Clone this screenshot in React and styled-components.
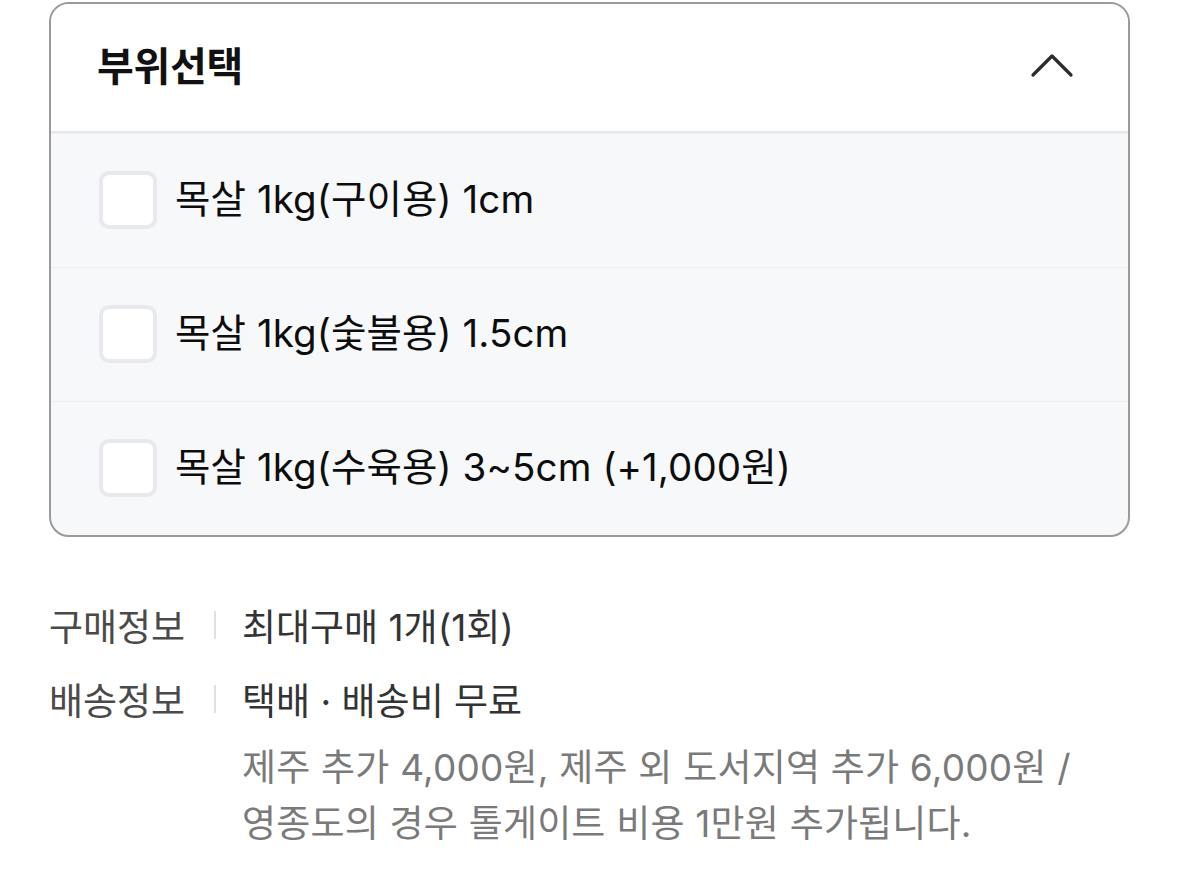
import { useState } from "react";
import styled, { createGlobalStyle } from "styled-components";

const GlobalStyle = createGlobalStyle`
  body {
    margin: 0;
    background: #fff;
    font-family: Inter, "Noto Sans CJK KR", sans-serif;
    color: #111;
  }
`;

const options = [
  { id: 1, label: "목살 1kg(구이용) 1cm" },
  { id: 2, label: "목살 1kg(숯불용) 1.5cm" },
  { id: 3, label: "목살 1kg(수육용) 3~5cm (+1,000원)" },
];

export default function App() {
  let [open, setOpen] = useState(true);
  let [checked, setChecked] = useState({});
  return (
    <Page>
      <GlobalStyle />
      <Card>
        <Header onClick={() => setOpen(!open)}>
          <Title>부위선택</Title>
          <svg width="44" height="28" viewBox="0 0 44 28">
            <path
              d="M3 25 L22 6 L41 25"
              fill="none"
              stroke="#2b2b2b"
              strokeWidth="3.2"
              strokeLinecap="round"
              strokeLinejoin="round"
            />
          </svg>
        </Header>
        {open &&
          options.map((o) => (
            <Option
              key={o.id}
              onClick={() => setChecked({ ...checked, [o.id]: !checked[o.id] })}
            >
              <Box $on={checked[o.id]} />
              <OptionText>{o.label}</OptionText>
            </Option>
          ))}
      </Card>
      <Info>
        <InfoRow>
          <InfoLabel>구매정보</InfoLabel>
          <Bar />
          <InfoValue>최대구매 1개(1회)</InfoValue>
        </InfoRow>
        <InfoRow>
          <InfoLabel>배송정보</InfoLabel>
          <Bar />
          <InfoValue>택배 · 배송비 무료</InfoValue>
        </InfoRow>
        <Note>
          제주 추가 4,000원, 제주 외 도서지역 추가 6,000원 /
          <br />
          영종도의 경우 톨게이트 비용 1만원 추가됩니다.
        </Note>
      </Info>
    </Page>
  );
}

const Page = styled.div`
  padding: 2px 49px 0 49px;
  width: 1081px;
`;

const Card = styled.div`
  border: 2px solid #9a9a9a;
  border-radius: 20px;
  overflow: hidden;
  background: #f7f8fa;
`;

const Header = styled.div`
  height: 129px;
  box-sizing: border-box;
  display: flex;
  align-items: center;
  justify-content: space-between;
  padding: 0 54px 8px 46px;
  background: #fff;
  border-bottom: 2px solid #e6e7ea;
  cursor: pointer;
`;

const Title = styled.h2`
  margin: 0;
  font-size: 40px;
  font-weight: 700;
  letter-spacing: -0.3px;
  color: #111;
`;

const Option = styled.div`
  height: 134px;
  box-sizing: border-box;
  display: flex;
  align-items: center;
  gap: 18px;
  padding: 0 48px 2px;
  border-top: 1px solid #eceef1;
  &:first-of-type {
    height: 133px;
    border-top: none;
  }
  cursor: pointer;
`;

const Box = styled.div`
  width: 50px;
  height: 50px;
  border: 4px solid #e8e9ec;
  border-radius: 10px;
  background: ${(p) => (p.$on ? "#222" : "#fff")};
`;

const OptionText = styled.span`
  display: inline-block;
  padding-bottom: 8px;
  font-size: 38.5px;
  font-weight: 400;
  letter-spacing: 0.1px;
  color: #0d0d0d;
`;

const Info = styled.div`
  padding-top: 51px;
`;

const InfoRow = styled.div`
  display: flex;
  align-items: center;
  height: 74px;
`;

const InfoLabel = styled.span`
  width: 165px;
  font-size: 37px;
  color: #4a4a4a;
`;

const Bar = styled.span`
  width: 2px;
  height: 28px;
  background: #e0e0e0;
  margin-right: 26px;
`;

const InfoValue = styled.span`
  font-size: 37px;
  color: #333;
`;

const Note = styled.p`
  margin: 4px 0 0 193px;
  font-size: 37px;
  line-height: 56px;
  letter-spacing: 0.2px;
  color: #7a7a7a;
`;
